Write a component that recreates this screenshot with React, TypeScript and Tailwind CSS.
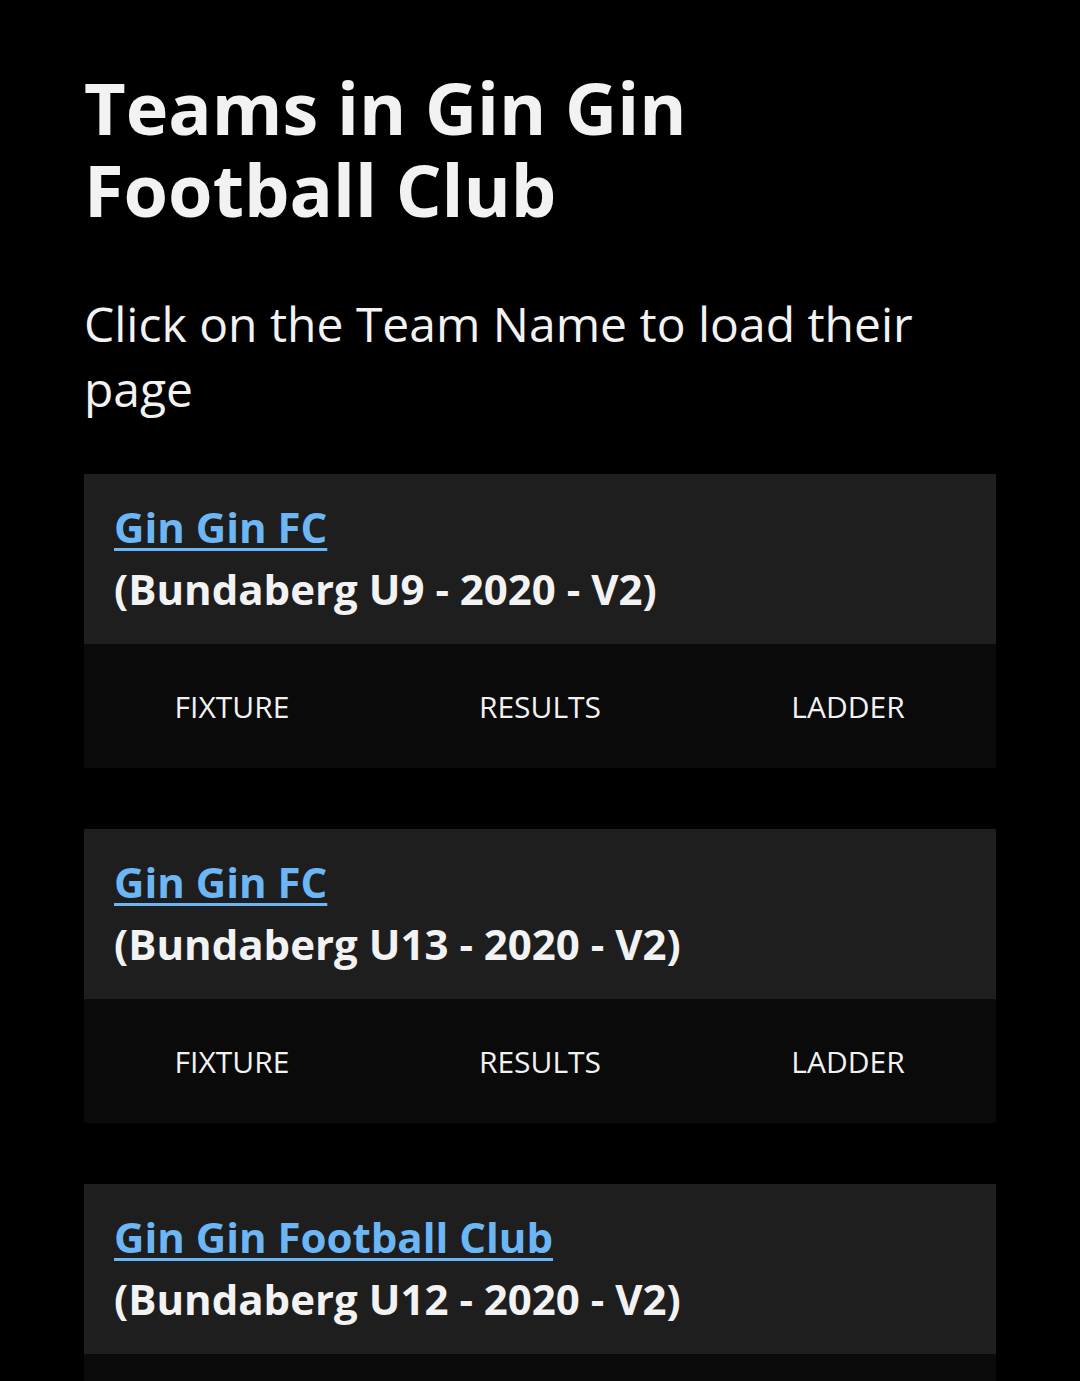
import React from 'react'

const teams = [
  { name: 'Gin Gin FC', comp: '(Bundaberg U9 - 2020 - V2)' },
  { name: 'Gin Gin FC', comp: '(Bundaberg U13 - 2020 - V2)' },
  { name: 'Gin Gin Football Club', comp: '(Bundaberg U12 - 2020 - V2)' },
]

function TeamCard({ name, comp }: { name: string; comp: string }) {
  return (
    <div>
      {/* Team header */}
      <div className="bg-[#1e1e1e] px-[30px] pt-[22px] pb-[24px] text-[42px] leading-[62px] font-bold">
        <a href="#" className="text-[#6cb6f5] underline decoration-[3px] underline-offset-[5px]">
          {name}
        </a>
        <div className="text-[#f2f2f2]">{comp}</div>
      </div>

      {/* Links */}
      <div className="bg-[#0a0a0a] h-[124px] flex justify-center items-center text-[30px] text-[#f2f2f2]">
        <a href="#" className="w-[308px] shrink-0 text-center">FIXTURE</a>
        <a href="#" className="w-[308px] shrink-0 text-center">RESULTS</a>
        <a href="#" className="w-[308px] shrink-0 text-center">LADDER</a>
      </div>
    </div>
  )
}

export default function App() {
  return (
    <div
      className="min-h-[1381px] bg-black text-[#f2f2f2] px-[84px] pt-[66px]"
      style={{ fontFamily: '"Open Sans", "Noto Sans", sans-serif' }}
    >
      <h1 className="text-[72px] leading-[82px] font-bold">Teams in Gin Gin Football Club</h1>

      <p className="mt-[61px] text-[48px] leading-[65px]">
        Click on the Team Name to load their page
      </p>

      <div className="mt-[53px] flex flex-col gap-[61px]">
        {teams.map((t, i) => (
          <TeamCard key={i} name={t.name} comp={t.comp} />
        ))}
      </div>
    </div>
  )
}
